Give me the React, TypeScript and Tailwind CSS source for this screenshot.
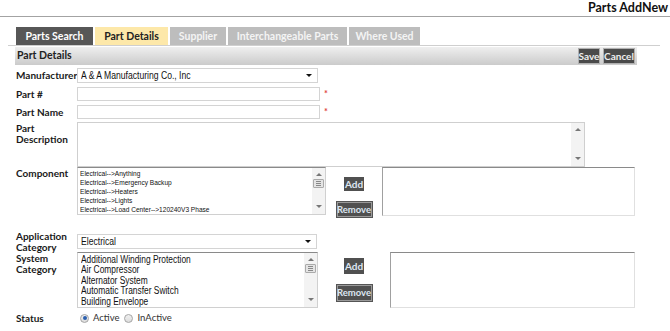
import React from "react"

const tabs = [
  { name: "Parts Search", w: "w-[77px]", cls: "bg-[#575757] text-white" },
  { name: "Part Details", w: "w-[73px]", cls: "bg-[#fde8a9] text-[#222]" },
  { name: "Supplier", w: "w-[56px]", cls: "bg-[#bdbdbd] text-[#f4f4f4]" },
  { name: "Interchangeable Parts", w: "w-[119px]", cls: "bg-[#bdbdbd] text-[#f4f4f4]" },
  { name: "Where Used", w: "w-[71px]", cls: "bg-[#bdbdbd] text-[#f4f4f4]" },
]

const components = [
  "Electrical-->Anything",
  "Electrical-->Emergency Backup",
  "Electrical-->Heaters",
  "Electrical-->Lights",
  "Electrical-->Load Center-->120240V3 Phase",
]

const systems = [
  "Additional Winding Protection",
  "Air Compressor",
  "Alternator System",
  "Automatic Transfer Switch",
  "Building Envelope",
]

// narrow Arial look of the listboxes / dropdowns
const arial = "font-['Liberation_Sans',Arial,sans-serif]"

function Up() {
  return <div className="w-0 h-0 border-x-[3px] border-x-transparent border-b-[3px] border-b-[#777]" />
}
function Down() {
  return <div className="w-0 h-0 border-x-[3px] border-x-transparent border-t-[3px] border-t-[#777]" />
}

function Scroll({ thumb }: { thumb?: string }) {
  return (
    <div className="w-[13px] h-full shrink-0 bg-[#f3f3f3] flex flex-col items-center pt-[5px] pb-[6px]">
      <Up />
      {thumb && (
        <div className={`${thumb} w-[11px] h-[9px] bg-[#e4e4e4] border border-[#aaa] rounded-[1px] flex flex-col items-center justify-center gap-[1px]`}>
          <div className="w-[5px] h-px bg-[#888]" />
          <div className="w-[5px] h-px bg-[#888]" />
          <div className="w-[5px] h-px bg-[#888]" />
        </div>
      )}
      <div className="flex-1" />
      <Down />
    </div>
  )
}

function Select({ value, w }: { value: string; w: string }) {
  return (
    <div className={`${w} h-[15px] border border-[#d4d4d4] bg-white flex items-center pl-[3px] pr-[5px] ${arial} font-normal text-[10.5px] text-[#111]`}>
      <span className="flex-1 leading-none">
        <span className="inline-block origin-left scale-x-[0.82] whitespace-nowrap">{value}</span>
      </span>
      <div className="w-0 h-0 border-x-[3px] border-x-transparent border-t-[3px] border-t-[#111]" />
    </div>
  )
}

function AddBtn() {
  return (
    <div className="w-[20px] h-[16px] bg-[#505050] flex items-center justify-center text-[10px] font-bold text-[#dde6f2] leading-none">
      Add
    </div>
  )
}

function RemoveBtn() {
  return (
    <div className="w-[35px] h-[16px] bg-[#505050] border border-[#9a9a9a] ring-1 ring-[#555] flex items-center justify-center text-[9.5px] text-[#dde6f2] leading-none">
      Remove
    </div>
  )
}

function Radio({ on }: { on?: boolean }) {
  return (
    <div className="w-[9px] h-[9px] rounded-full border border-[#a5a5a5] bg-gradient-to-b from-[#f0f0f0] to-[#dcdcdc] flex items-center justify-center">
      {on && <div className="w-[4px] h-[4px] rounded-full bg-[#2b5fae]" />}
    </div>
  )
}

export default function App() {
  return (
    <div className="w-[670px] h-[331px] overflow-hidden bg-white font-['Lato',sans-serif] text-[#222]">
      {/* title */}
      <div className="h-[17px] border-b border-[#a3a3a3] flex justify-end pr-[2px]">
        <span className="text-[12.5px] font-bold leading-[15px] text-[#111]">Parts AddNew</span>
      </div>

      {/* tabs */}
      <div className="mt-[10px] ml-[8px] w-[652px] h-[19px] border-b border-[#cfcfcf] pl-[8px] flex gap-[2px]">
        {tabs.map((t) => (
          <div key={t.name} className={`${t.w} ${t.cls} h-[18px] flex items-center justify-center text-[10.5px] font-bold leading-none`}>
            {t.name}
          </div>
        ))}
      </div>

      {/* panel header */}
      <div className="mt-[1px] ml-[15px] w-[622px] h-[18px] bg-gradient-to-b from-[#efefef] to-[#cbcbcb] flex items-center pl-[2px] pr-[2px]">
        <span className="flex-1 text-[10.5px] font-bold">Part Details</span>
        <div className="flex gap-[3px]">
          <div className="w-[22px] h-[16px] bg-[#4a4a4a] border border-[#b0b0b0] flex items-center justify-center text-[10px] font-bold text-[#eee] leading-none">Save</div>
          <div className="w-[32px] h-[16px] bg-[#4a4a4a] border border-[#b0b0b0] flex items-center justify-center text-[10px] font-bold text-[#eee] leading-none">Cancel</div>
        </div>
      </div>

      {/* form */}
      <div className="pl-[16px] text-[10px] font-bold text-[#1a1a1a]">
        <div className="mt-[3px] flex items-center h-[15px]">
          <div className="w-[61px] shrink-0 whitespace-nowrap">Manufacturer</div>
          <Select value="A & A Manufacturing Co., Inc" w="w-[241px]" />
        </div>

        <div className="mt-[4px] flex items-center h-[14px]">
          <div className="w-[61px] shrink-0">Part #</div>
          <div className="w-[243px] h-[14px] border border-[#d4d4d4]" />
          <span className="ml-[4px] text-[#e04040] text-[9px]">*</span>
        </div>

        <div className="mt-[4px] flex items-center h-[14px]">
          <div className="w-[61px] shrink-0">Part Name</div>
          <div className="w-[243px] h-[14px] border border-[#d4d4d4]" />
          <span className="ml-[4px] text-[#e04040] text-[9px]">*</span>
        </div>

        <div className="mt-[3px] flex h-[45px]">
          <div className="w-[61px] shrink-0 leading-[11px] pt-[1px]">Part<br />Description</div>
          <div className="w-[508px] h-[45px] border border-[#cfcfcf] flex justify-end">
            <Scroll />
          </div>
        </div>

        <div className="flex h-[50px]">
          <div className="w-[61px] shrink-0 pt-[1px] leading-[11px]">Component</div>
          <div className={`w-[249px] h-[48px] border border-[#d0d0d0] border-t-[#8a8a8a] flex ${arial} font-normal text-[8px] text-[#111]`}>
            <div className="flex-1 min-w-0 pl-[2px] pt-[1px] leading-[9px]">
              {components.map((c) => (
                <div key={c} className="origin-left scale-x-[0.82] whitespace-nowrap">{c}</div>
              ))}
            </div>
            <Scroll thumb="mt-[3px]" />
          </div>
          <div className="w-[56px] flex flex-col items-center pt-[10px] gap-[11px]">
            <AddBtn />
            <RemoveBtn />
          </div>
          <div className="w-[253px] h-[49px] border border-[#e0e0e0] border-t-[#8a8a8a] border-l-[#a0a0a0]" />
        </div>

        <div className="mt-[17px] flex h-[15px]">
          <div className="w-[61px] shrink-0 leading-[10.5px] -mt-[3px]">Application<br />Category</div>
          <Select value="Electrical" w="w-[240px]" />
        </div>

        <div className="mt-[3px] flex h-[56px]">
          <div className="w-[61px] shrink-0 leading-[10.5px] pt-[1px]">System<br />Category</div>
          <div className={`w-[241px] h-[56px] border border-[#d0d0d0] border-t-[#8a8a8a] flex ${arial} font-normal text-[10px] text-[#111]`}>
            <div className="flex-1 min-w-0 pl-[3px] pt-[2px] leading-[10.4px]">
              {systems.map((c) => (
                <div key={c} className="origin-left scale-x-[0.84] whitespace-nowrap">{c}</div>
              ))}
            </div>
            <Scroll thumb="mt-[3px]" />
          </div>
          <div className="w-[72px] flex flex-col items-center pt-[6px] gap-[11px]">
            <AddBtn />
            <RemoveBtn />
          </div>
          <div className="w-[245px] h-[56px] border border-[#e0e0e0] border-t-[#8a8a8a] border-l-[#a0a0a0]" />
        </div>

        <div className="mt-[4px] flex items-center h-[12px]">
          <div className="w-[61px] shrink-0">Status</div>
          <div className="flex items-center ml-[3px] font-normal text-[9.5px] text-[#333]">
            <Radio on />
            <span className="ml-[4px]">Active</span>
            <div className="ml-[5px]"><Radio /></div>
            <span className="ml-[4px]">InActive</span>
          </div>
        </div>
      </div>
    </div>
  )
}
